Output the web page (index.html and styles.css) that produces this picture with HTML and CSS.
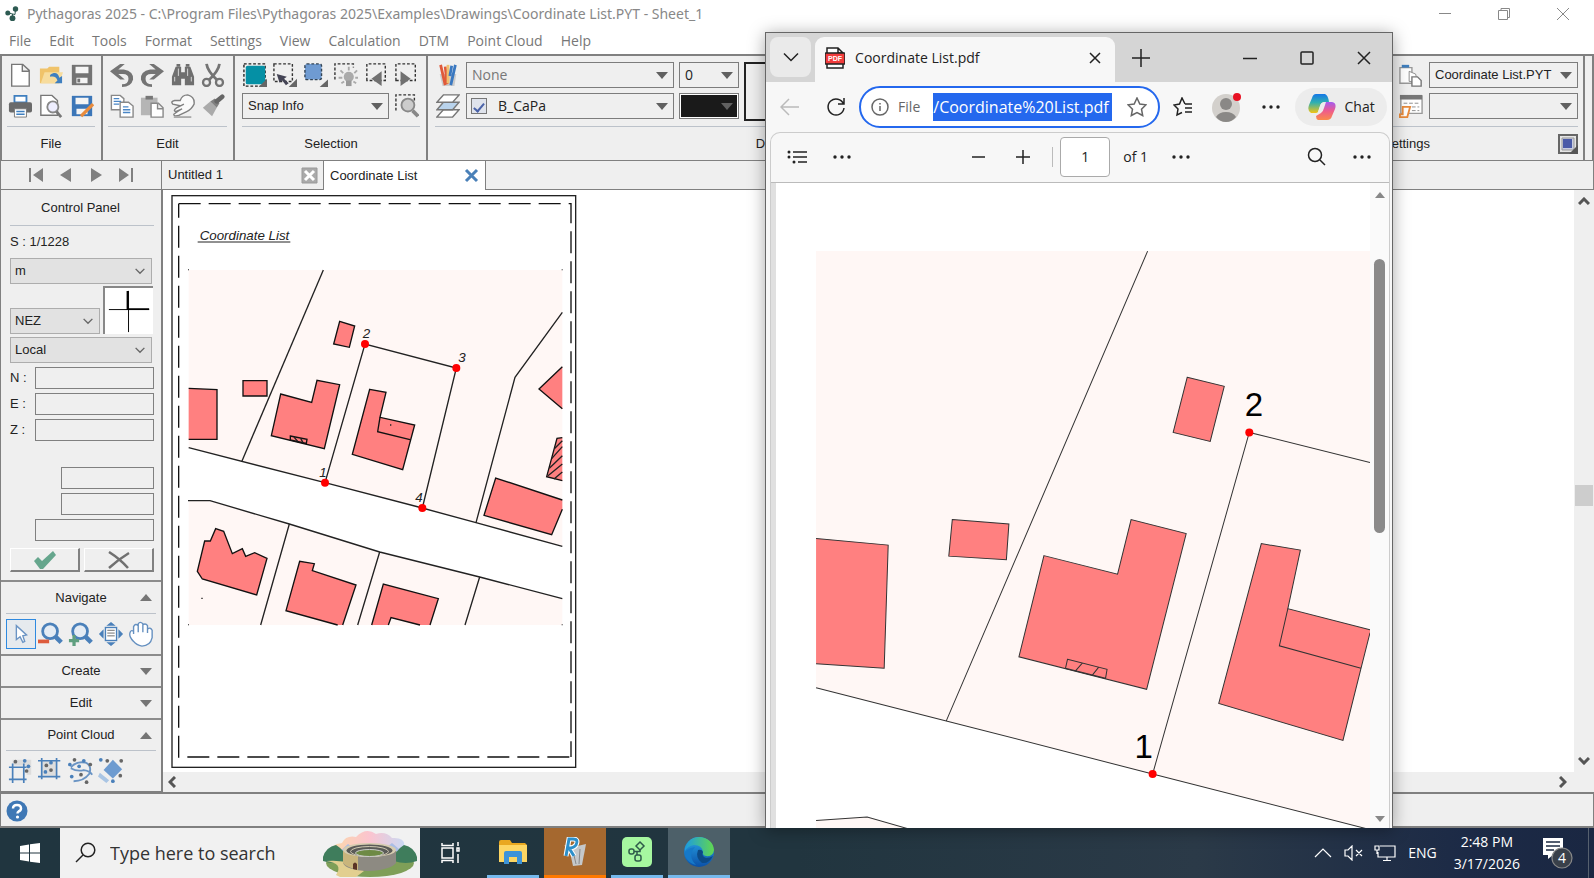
FILE: index.html
```html
<!DOCTYPE html>
<html lang="en">
<head>
<meta charset="utf-8">
<title>Pythagoras 2025</title>
<link rel="stylesheet" href="styles.css">
</head>
<body>
<svg class="defs" aria-hidden="true">
  <defs>
    <linearGradient id="edgeA" x1="0" y1="0" x2="1" y2="0"><stop offset="0" stop-color="#1c9be0"/><stop offset="1" stop-color="#62d84e"/></linearGradient>
    <linearGradient id="edgeB" x1="0" y1="0" x2="0" y2="1"><stop offset="0" stop-color="#2aa6e6"/><stop offset="1" stop-color="#0a50a8"/></linearGradient>
    <linearGradient id="copA" x1="0" y1="0" x2="0" y2="1"><stop offset="0" stop-color="#1477e8"/><stop offset=".45" stop-color="#2fb0b0"/><stop offset="1" stop-color="#f2c414"/></linearGradient>
    <linearGradient id="copB" x1="0" y1="0" x2="0" y2="1"><stop offset="0" stop-color="#a45cf0"/><stop offset=".5" stop-color="#ee5c8c"/><stop offset="1" stop-color="#fb8a4a"/></linearGradient>
    <linearGradient id="sky" x1="0" y1="0" x2="1" y2="0"><stop offset="0" stop-color="#fbd9a8"/><stop offset=".5" stop-color="#fbc4cf"/><stop offset="1" stop-color="#c3dcf8"/></linearGradient>
    <symbol id="tri" viewBox="0 0 12 7"><path d="M0 0H12L6 7Z" fill="#606060"/></symbol>
    <symbol id="chev" viewBox="0 0 12 8"><path d="M1 1L6 6L11 1" fill="none" stroke="#666" stroke-width="1.6"/></symbol>
    <symbol id="dots" viewBox="0 0 18 4"><circle cx="2" cy="2" r="1.7"/><circle cx="9" cy="2" r="1.7"/><circle cx="16" cy="2" r="1.7"/></symbol>
  </defs>
</svg>

<main class="app">
  <header class="titlebar">
    <svg class="logo" viewBox="0 0 14 16"><g fill="#2d5a52"><circle cx="10.500" cy="3" r="2.700"/><circle cx="2.800" cy="7" r="2.500"/><circle cx="7.500" cy="12.200" r="2.900"/></g><path d="M3 7L10 8.500L10.500 3M7.500 12V8" stroke="#2d5a52" fill="none"/></svg>
    <h1>Pythagoras 2025 - C:\Program Files\Pythagoras 2025\Examples\Drawings\Coordinate List.PYT - Sheet_1</h1>
    <div class="wincontrols">
      <button aria-label="Minimize"><svg width="14" height="14" viewBox="0 0 14 14"><path d="M1 6.500H13"/></svg></button>
      <button aria-label="Restore"><svg width="14" height="14" viewBox="0 0 14 14"><path d="M1.500 3.500H10.500V12.500H1.500ZM4 3.500V1.500H12.500V10.500H10.500"/></svg></button>
      <button aria-label="Close"><svg width="14" height="14" viewBox="0 0 14 14"><path d="M1 1L13 13M13 1L1 13"/></svg></button>
    </div>
  </header>
  <nav class="menu">
    <a href="#">File</a><a href="#">Edit</a><a href="#">Tools</a><a href="#">Format</a><a href="#">Settings</a><a href="#">View</a><a href="#">Calculation</a><a href="#">DTM</a><a href="#">Point Cloud</a><a href="#">Help</a>
  </nav>

  <section class="ribbon">
    <div class="group g-file">
      <div class="tools">
        <button aria-label="New"><svg viewBox="0 0 26 26"><path d="M4 1.500H16L23 8V25H4ZM15.500 1.500V9H23" fill="#fff" stroke="#777" stroke-width="1.500"/></svg></button>
        <button aria-label="Open"><svg viewBox="0 0 26 26"><path d="M1 22V6H9L11 4H22V22Z" fill="#f0c36a"/><path d="M2 22L6 10H26L22 22Z" fill="#f7dc9d"/><path d="M12 13C17 9 21 11 22 16L25 14V22H17L20 19C19 15 16 14 12 15Z" fill="#3f7fbf"/></svg></button>
        <button aria-label="Save"><svg viewBox="0 0 26 26"><path d="M2 2H24V24H2Z" fill="#737373"/><path d="M6 4H20V11H6ZM7 16H19V22H7Z" fill="#f4f4f4"/><path d="M8 17H11V21H8Z" fill="#737373"/></svg></button>
        <button aria-label="Print"><svg viewBox="0 0 26 26"><path d="M7 2H20V9H7Z" fill="#fff" stroke="#3f7fbf" stroke-width="2"/><rect x="1" y="9" width="25" height="11" rx="2" fill="#6a6a6a"/><path d="M7 16H20V25H7Z" fill="#fff" stroke="#777"/><path d="M9 19H18M9 22H18" stroke="#3f7fbf" stroke-width="1.500"/></svg></button>
        <button aria-label="Print preview"><svg viewBox="0 0 26 26"><path d="M2 1.500H14L20 7V23H2Z" fill="#fff" stroke="#777" stroke-width="1.500"/><circle cx="15" cy="14" r="6" fill="#eef" stroke="#888" stroke-width="2"/><path d="M19 19L24 25" stroke="#777" stroke-width="3"/></svg></button>
        <button aria-label="Save as"><svg viewBox="0 0 26 26"><path d="M2 2H24V24H2Z" fill="#3b76b8"/><path d="M6 4H20V11H6ZM7 16H19V22H7Z" fill="#f4f4f4"/><path d="M12 24L25 11" stroke="#e98b3c" stroke-width="3.500"/></svg></button>
      </div>
      <h2>File</h2>
    </div>
    <div class="group g-edit">
      <div class="tools">
        <button aria-label="Undo"><svg viewBox="0 0 26 26"><path d="M0 9L11 1H16L9 7H15Q26 9 25 18Q23 26 13 26V23Q20 23 20 17Q20 12 14 12H9L16 18H11Z" fill="#747474"/></svg></button>
        <button aria-label="Redo"><svg viewBox="0 0 26 26"><path d="M26 9L15 1H10L17 7H11Q0 9 1 18Q3 26 13 26V23Q6 23 6 17Q6 12 12 12H17L10 18H15Z" fill="#747474"/></svg></button>
        <button aria-label="Find"><svg viewBox="0 0 26 26"><path d="M5 4H11V10H15V4H21L25 15V24H15V17H11V24H1V15Z" fill="#6f6f6f"/><path d="M6 1V4H10V1ZM16 1V4H20V1Z" fill="#6f6f6f"/><path d="M4 20V15M22 20V15M8 6V14M18 6V14" stroke="#ddd"/></svg></button>
        <button aria-label="Cut"><svg viewBox="0 0 26 26"><path d="M6 1Q7 9 18 19M20 1Q19 9 8 19" fill="none" stroke="#747474" stroke-width="3"/><circle cx="6" cy="21" r="3.800" fill="#eee" stroke="#747474" stroke-width="2.500"/><circle cx="20" cy="21" r="3.800" fill="#eee" stroke="#747474" stroke-width="2.500"/></svg></button>
        <button aria-label="Copy"><svg viewBox="0 0 26 26"><g fill="#fff" stroke="#888" stroke-width="1.500"><path d="M1.500 1.500H11L15 5V17H1.500Z"/><path d="M11 9H20L25 13V25H11Z"/></g><path d="M4 5H10M4 8H12M4 11H10M14 14H20M14 17H22M14 20H22" stroke="#4a86c6" stroke-width="1.500"/></svg></button>
        <button aria-label="Paste"><svg viewBox="0 0 26 26"><path d="M1 4H19V23H1Z" fill="#b5b5b5"/><path d="M6 2H14V6H6Z" fill="#777"/><path d="M12 10H20L25 15V25H12ZM19 10V16H25" fill="#fff" stroke="#888" stroke-width="1.500"/></svg></button>
        <button aria-label="Pick"><svg viewBox="0 0 26 26"><path d="M11 13L2 11Q-1 8 4 7L10 7Q12 1 18 1Q26 3 25 11Q22 17 17 19L9 23Q3 25 3 22Q7 19 12 16L5 19Q2 18 6 15L14 11" fill="#fafafa" stroke="#808080" stroke-width="1.500"/><path d="M3 25H22" stroke="#aaa" stroke-width="2"/></svg></button>
        <button aria-label="Format painter"><svg viewBox="0 0 26 26"><path d="M2 15L10 8L17 15L12 24Z" fill="#aaa"/><path d="M10 8L15 5L20 10L17 15Z" fill="#808080"/><path d="M17 8L23 3" stroke="#666" stroke-width="5" stroke-linecap="round"/></svg></button>
      </div>
      <h2>Edit</h2>
    </div>
    <div class="group g-sel">
      <div class="tools">
        <button aria-label="Fill selection"><svg viewBox="0 0 26 26"><path d="M1 1H24V25H1Z" fill="none" stroke="#222" stroke-width="1.500" stroke-dasharray="3 2"/><rect x="3" y="3" width="21" height="20" rx="2" fill="#0590a5"/><path d="M26 17V26H17Z" fill="#666"/></svg></button>
        <button aria-label="Select arrow"><svg viewBox="0 0 26 26"><path d="M1 1H21V20H1Z" fill="none" stroke="#333" stroke-width="1.500" stroke-dasharray="3 2"/><path d="M4 12L15 15L12 17L17 22L14 24L10 19L7 21Z" fill="#445"/><path d="M26 17V26H17Z" fill="#666"/></svg></button>
        <button aria-label="Select area"><svg viewBox="0 0 26 26"><rect x="1" y="1" width="18" height="17" rx="2" fill="#6f9bd2" stroke="#345" stroke-width="1.500" stroke-dasharray="3 2"/><path d="M26 18V26H17Z" fill="#666"/></svg></button>
        <button aria-label="Highlight"><svg viewBox="0 0 26 26"><path d="M1 18V1H21V5" fill="none" stroke="#333" stroke-width="1.500" stroke-dasharray="3 2"/><path d="M16 4V8M7 8L10 11M25 8L22 11M5 16H9M27 16H23M8 22L11 20M24 22L21 20" stroke="#aaa" stroke-width="2"/><circle cx="16" cy="15" r="5.500" fill="#aaa"/><path d="M13 19H19V25H13Z" fill="#999"/></svg></button>
        <button aria-label="Previous selection"><svg viewBox="0 0 26 26"><path d="M2 19V1H22V19Z" fill="none" stroke="#333" stroke-width="1.500" stroke-dasharray="3 2"/><path d="M7 17L18 9V25Z" fill="#707070"/></svg></button>
        <button aria-label="Next selection"><svg viewBox="0 0 26 26"><path d="M1 19V1H22V19Z" fill="none" stroke="#333" stroke-width="1.500" stroke-dasharray="3 2"/><path d="M17 17L6 9V25Z" fill="#707070"/></svg></button>
      </div>
      <div class="row">
        <label class="combo grow"><select aria-label="Snap"><option>Snap Info</option></select><svg><use href="#tri"/></svg></label>
        <button class="ico" aria-label="Zoom selection"><svg viewBox="0 0 26 26"><path d="M1 18V1H21V8" fill="none" stroke="#333" stroke-width="1.500" stroke-dasharray="3 2"/><circle cx="14" cy="12" r="7" fill="#ccc" stroke="#888" stroke-width="2"/><path d="M19 18L25 24" stroke="#888" stroke-width="4"/></svg></button>
      </div>
      <h2>Selection</h2>
    </div>
    <div class="group g-def">
      <div class="row">
        <button class="ico" aria-label="Pens"><svg viewBox="0 0 26 26"><path d="M4 12H22L20 25H7Z" fill="#ccc"/><path d="M5 2L10 24M10 4L12 23" stroke="#e05a3a" stroke-width="3"/><path d="M13 2V22" stroke="#efc070" stroke-width="3"/><path d="M21 2L16 24M17 3L15 14" stroke="#3a78c0" stroke-width="3"/></svg></button>
        <label class="combo wide dim"><select aria-label="Style"><option>None</option></select><svg><use href="#tri"/></svg></label>
        <label class="combo small"><select aria-label="Line width"><option>0</option></select><svg><use href="#tri"/></svg></label>
        <div class="swatch"></div>
      </div>
      <div class="row">
        <button class="ico" aria-label="Layers"><svg viewBox="0 0 26 26"><g stroke="#777" stroke-width="1.500"><path d="M1 25L8 17H25L18 25Z" fill="#fff"/><path d="M1 17L8 9H25L18 17Z" fill="#b9d3ec"/><path d="M1 9L8 1H25L18 9Z" fill="#fff"/></g></svg></button>
        <label class="combo wide check"><input type="checkbox" checked aria-label="Layer visible"><select aria-label="Layer"><option>B_CaPa</option></select><svg><use href="#tri"/></svg></label>
        <label class="combo small black"><select aria-label="Color"><option></option></select><svg><use href="#tri"/></svg></label>
      </div>
      <h2>Defaults</h2>
    </div>
    <div class="group g-doc">
      <div class="row">
        <button class="ico" aria-label="Documents"><svg viewBox="0 0 26 26"><path d="M1 5H14V22H1Z" fill="#fff" stroke="#999" stroke-width="1.500"/><path d="M3 2H11V5H3Z" fill="#3f7fbf"/><path d="M11 9L18 12L20 20H11Z" fill="#fff" stroke="#888"/><path d="M14 15H20L24 19V25H14Z" fill="#fff" stroke="#777" stroke-width="1.500"/></svg></button>
        <label class="combo doc"><select aria-label="Document"><option>Coordinate List.PYT</option></select><svg><use href="#tri"/></svg></label>
      </div>
      <div class="row">
        <button class="ico" aria-label="Sheet table"><svg viewBox="0 0 26 26"><path d="M2 2H25V21H2Z" fill="#fff" stroke="#999" stroke-width="1.500"/><path d="M1 1H25V6H1Z" fill="#777"/><path d="M5 10H22M14 14H22M14 18H22" stroke="#888" stroke-dasharray="4 2"/><path d="M4 14H12L9 25H1V22H4Z" fill="#fff" stroke="#e98b3c" stroke-width="2"/></svg></button>
        <label class="combo doc"><select aria-label="Sheet"><option></option></select><svg><use href="#tri"/></svg></label>
      </div>
      <div class="foot"><h2>Settings</h2><button class="corner" aria-label="Options"><svg viewBox="0 0 20 20"><path d="M1 1H19V19H1Z" fill="#e4e4e4" stroke="#666" stroke-width="2"/><path d="M4 4H16V16H4Z" fill="#c8cce0" stroke="#999"/><path d="M5 5H14V14H5Z" fill="#4a5aa8"/><path d="M20 11V20H11Z" fill="#555"/></svg></button></div>
    </div>
  </section>

  <div class="tabs">
    <div class="pager">
      <button aria-label="First"><svg width="16" height="16" viewBox="0 0 16 16"><path d="M1 1H3V15H1ZM15 1V15L5 8Z"/></svg></button>
      <button aria-label="Previous"><svg width="16" height="16" viewBox="0 0 16 16"><path d="M13 1V15L2 8Z"/></svg></button>
      <button aria-label="Next"><svg width="16" height="16" viewBox="0 0 16 16"><path d="M3 1V15L14 8Z"/></svg></button>
      <button aria-label="Last"><svg width="16" height="16" viewBox="0 0 16 16"><path d="M13 1H15V15H13ZM1 1V15L11 8Z"/></svg></button>
    </div>
    <div class="tab"><a href="#">Untitled 1</a><button aria-label="Close tab"><svg width="17" height="17" viewBox="0 0 17 17"><path d="M1 1H16V16H1Z" fill="#aaa" stroke="#999"/><path d="M4 4L13 13M13 4L4 13" stroke="#fff" stroke-width="3"/></svg></button></div>
    <div class="tab active"><a href="#">Coordinate List</a><button aria-label="Close tab"><svg width="17" height="17" viewBox="0 0 17 17"><path d="M3 3L14 14M14 3L3 14" stroke="#4a80b8" stroke-width="3"/></svg></button></div>
    <div class="rest"></div>
  </div>

  <div class="work">
    <aside class="panel">
      <section class="control">
        <h2>Control Panel</h2>
        <p>S : 1/1228</p>
        <label class="flat"><select aria-label="Unit"><option>m</option></select><svg><use href="#chev"/></svg></label>
        <div class="axisrow">
          <label class="flat"><select aria-label="Axis order"><option>NEZ</option></select><svg><use href="#chev"/></svg></label>
          <svg class="axis" viewBox="0 0 50 48"><path d="M4 22.500H46M24.500 3V46" stroke="#000"/><path d="M23.500 3V22H46" stroke="#000" stroke-width="2" fill="none"/></svg>
        </div>
        <label class="flat"><select aria-label="Coordinate system"><option>Local</option></select><svg><use href="#chev"/></svg></label>
        <div class="fields">
          <label for="fn">N :</label><input id="fn">
          <label for="fe">E :</label><input id="fe">
          <label for="fz">Z :</label><input id="fz">
        </div>
        <div class="extra"><input aria-label="Value 1"><input aria-label="Value 2"><input class="long" aria-label="Value 3"></div>
        <div class="confirm">
          <button aria-label="Accept"><svg width="24" height="20" viewBox="0 0 24 20"><path d="M1 11L5 7L9 11L20 1L23 5L10 19H7Z" fill="#66a68d"/></svg></button>
          <button aria-label="Cancel"><svg width="22" height="18" viewBox="0 0 22 18"><path d="M1 1Q12 8 20 17M21 2Q11 8 1 17" fill="none" stroke="#707070" stroke-width="2.500"/></svg></button>
        </div>
      </section>
      <section>
        <h3>Navigate<svg class="up"><use href="#tri"/></svg></h3>
        <div class="icons">
          <button class="on" aria-label="Pointer"><svg viewBox="0 0 28 28"><path d="M9 5V20L13 17L16 23L18 22L16 16L20 15Z" fill="#fff" stroke="#6b94c4" stroke-width="1.500"/></svg></button>
          <button aria-label="Zoom out"><svg viewBox="0 0 28 28"><circle cx="13" cy="11" r="8" fill="#e5ecf4" stroke="#4a80ba" stroke-width="3"/><path d="M19 17L25 23" stroke="#4a80ba" stroke-width="5"/><path d="M0 22H12" stroke="#dd5b3c" stroke-width="4"/></svg></button>
          <button aria-label="Zoom in"><svg viewBox="0 0 28 28"><circle cx="13" cy="11" r="8" fill="#e5ecf4" stroke="#4a80ba" stroke-width="3"/><path d="M19 17L25 23" stroke="#4a80ba" stroke-width="5"/><path d="M1 21H12M6.500 15V27" stroke="#5f9f7f" stroke-width="3.500"/></svg></button>
          <button aria-label="Fit"><svg viewBox="0 0 28 28"><rect x="8" y="7" width="12" height="14" fill="#fff" stroke="#4a80ba" stroke-width="1.500"/><path d="M10 10H18M10 13H18M10 16H18" stroke="#666"/><path d="M9 5L14 1L19 5ZM9 23L14 27L19 23ZM6 9L1 14L6 19ZM22 9L27 14L22 19Z" fill="#4a80ba"/></svg></button>
          <button aria-label="Pan"><svg viewBox="0 0 28 28"><path d="M6 22Q1 17 2 13Q3 9 6 11V14V6Q8 2 11 5V12V3Q13 0 16 3V12V4Q19 2 21 5V13V9Q24 6 26 10V18Q24 27 15 27Q9 26 6 22Z" fill="#fff" stroke="#6590c0" stroke-width="1.500"/></svg></button>
        </div>
      </section>
      <section><h3>Create<svg><use href="#tri"/></svg></h3></section>
      <section><h3>Edit<svg><use href="#tri"/></svg></h3></section>
      <section class="last">
        <h3>Point Cloud<svg class="up"><use href="#tri"/></svg></h3>
        <div class="icons">
          <button aria-label="Clip outside"><svg viewBox="0 0 28 28"><path d="M5 2H25V18H20V8H5Z" fill="#ddd"/><path d="M1 10H20M1 23H20M5 6V27M17 6V27" stroke="#4a80ba" stroke-width="1.800"/><g fill="#666"><circle cx="8" cy="4" r="2"/><circle cx="20" cy="14" r="2"/></g><g fill="#4a80ba"><circle cx="18" cy="3" r="2"/><circle cx="22" cy="9" r="2"/></g></svg></button>
          <button aria-label="Clip inside"><svg viewBox="0 0 28 28"><path d="M4 3H20V19H4Z" fill="#ddd"/><path d="M0 3H24M0 20H24M4 0V23M20 0V23" stroke="#4a80ba" stroke-width="1.800"/><g fill="#666"><circle cx="9" cy="8" r="2"/><circle cx="14" cy="13" r="2"/></g><g fill="#4a80ba"><circle cx="14" cy="5" r="2"/><circle cx="8" cy="15" r="2"/></g></svg></button>
          <button aria-label="Lasso"><svg viewBox="0 0 28 28"><path d="M3 10Q9 3 19 5Q26 8 23 17Q17 25 6 25M3 11Q10 15 17 13Q24 14 26 18" fill="none" stroke="#6a94c4" stroke-width="2"/><g fill="#4a80ba"><circle cx="2" cy="7" r="2"/><circle cx="17" cy="3" r="2"/><circle cx="4" cy="20" r="2"/><circle cx="12" cy="9" r="2"/></g><g fill="#666"><circle cx="7" cy="2" r="2"/><circle cx="24" cy="7" r="2"/><circle cx="14" cy="18" r="2"/><circle cx="20" cy="26" r="2"/></g></svg></button>
          <button aria-label="Erase points"><svg viewBox="0 0 28 28"><path d="M6 13L16 2L26 12L16 22Z" fill="#6d9bd0"/><path d="M2 16L12 24L9 27L0 20Z" fill="#a9c5e4"/><g fill="#4a80ba"><circle cx="3" cy="2" r="2"/><circle cx="16" cy="25" r="2"/></g><g fill="#666"><circle cx="10" cy="3" r="2"/><circle cx="25" cy="3" r="2"/><circle cx="24" cy="19" r="2"/></g></svg></button>
        </div>
      </section>
    </aside>
    <div class="canvas">
      <div class="sheetarea">
        <svg class="sheet" viewBox="0 0 1260 1740" role="img" aria-label="Coordinate list drawing">
          <rect x="21" y="17" width="1211" height="1715" fill="#fff" stroke="#222" stroke-width="4"/>
          <g fill="none" stroke="#111" stroke-width="4" stroke-dasharray="66 24"><path d="M41 41H1218V1701"/><path d="M41 41V1701H1218" stroke-dashoffset="24"/></g>
          <text class="cad title" x="104" y="149">Coordinate List</text>
          <path d="M98 156H376" stroke="#222" stroke-width="3"/>
          <path d="M71 240H1192V1069L933 998L480 878L71 773ZM71 932H135L373 1002L644 1086L944 1161L1192 1226V1305H71Z" fill="#fff7f5"/>
          <g fill="#ff8080" stroke="#111" stroke-width="4">
            <path d="M71 595L156 599V748H71"/><path d="M234 572H306V618H234Z"/><path d="M524 394L569 408L553 472L506 462Z"/>
            <path d="M347 612L440 637L456 571L524 584L478 776L319 737Z"/><path d="M376 738L426 748L424 760L376 750Z"/>
            <path d="M614 598L663 607L645 682L749 705L713 839L562 793Z"/><path d="M645 682L638 725L735 749" fill="none"/>
            <path d="M1192 530L1122 597L1192 656"/><path d="M1192 743L1176 745L1145 860L1192 872"/>
            <path d="M1192 930L992 864L957 976L1160 1034L1192 958"/>
            <path d="M119 1053H136L152 1016L176 1024L202 1091L232 1076L242 1099L269 1088L306 1105L275 1215L112 1167L97 1144Z"/>
            <path d="M533 1305L573 1185L442 1142L448 1121L404 1114L363 1262L518 1305"/>
            <path d="M620 1305L655 1182L820 1226L795 1305" stroke-linejoin="miter"/>
          </g>
          <path d="M670 1306L678 1283L765 1306Z" fill="#fff7f5"/><path d="M670 1305L678 1283L765 1305" fill="none" stroke="#111" stroke-width="4"/>
          <g fill="none" stroke="#222" stroke-width="4"><path d="M475 240L230 815"/><path d="M71 773L480 878L772 954L933 998L1192 1069"/><path d="M480 878L600 462L874 534L772 954"/><path d="M1192 367L1050 562L933 998"/><path d="M69 932H135L373 1002L644 1086L944 1161L1192 1226"/><path d="M373 1002L287 1305M644 1086L578 1305M944 1161L900 1305"/><path d="M1153 835L1192 797M1160 806L1192 770M1149 857L1192 822M1167 867L1192 846M1168 776L1192 752M387 741L398 754M407 745L414 758"/></g>
          <path d="M69 238H72V241H69ZM1190 238H1193V241H1190ZM69 1303H72V1306H69ZM1190 1303H1193V1306H1190ZM109 1223H113V1227H109ZM675 703H679V707H675Z" fill="#222"/>
          <g fill="#f00"><circle cx="600" cy="462" r="12"/><circle cx="874" cy="534" r="12"/><circle cx="480" cy="878" r="12"/><circle cx="772" cy="954" r="12"/></g>
          <g class="cad num"><text x="593" y="444">2</text><text x="880" y="515">3</text><text x="463" y="860">1</text><text x="751" y="935">4</text></g>
        </svg>
      </div>
      <div class="vscroll"><svg width="12" height="8" viewBox="0 0 12 8"><path d="M1 7L6 2L11 7"/></svg><div class="thumb"></div><svg width="12" height="8" viewBox="0 0 12 8"><path d="M1 1L6 6L11 1"/></svg></div>
      <div class="hscroll"><svg width="8" height="12" viewBox="0 0 8 12"><path d="M7 1L2 6L7 11"/></svg><svg width="8" height="12" viewBox="0 0 8 12"><path d="M1 1L6 6L1 11"/></svg></div>
    </div>
  </div>
  <footer class="status"><button aria-label="Help"><svg width="22" height="22" viewBox="0 0 22 22"><circle cx="11" cy="11" r="10.500" fill="#3f78b5"/><path d="M7 8.500Q7 5 11 5Q15 5 15 8.500Q15 10.500 12.500 11.500Q11.500 12 11.500 13.500" fill="none" stroke="#fff" stroke-width="2.500"/><circle cx="11.500" cy="17" r="1.600" fill="#fff"/></svg></button></footer>
</main>

<section class="browser">
  <header class="btabs">
    <button class="tabmenu" aria-label="Tab actions"><svg width="16" height="10" viewBox="0 0 16 10"><path d="M1 1.500L8 8.500L15 1.500"/></svg></button>
    <div class="btab">
      <svg width="20" height="22" viewBox="0 0 20 22"><path d="M2 1H13L18 6V21H2ZM13 1V6H18" fill="#fff" stroke="#222" stroke-width="1.500"/><rect x="0" y="6" width="20" height="11" rx="1" fill="#f23c3c"/><text x="3" y="14" class="pdf">PDF</text></svg>
      <span>Coordinate List.pdf</span>
      <button aria-label="Close tab"><svg width="12" height="12" viewBox="0 0 12 12"><path d="M1 1L11 11M11 1L1 11"/></svg></button>
    </div>
    <button class="newtab" aria-label="New tab"><svg width="20" height="20" viewBox="0 0 20 20"><path d="M10 1V19M1 10H19"/></svg></button>
    <div class="bctl">
      <button aria-label="Minimize"><svg width="14" height="14" viewBox="0 0 14 14"><path d="M0 7.500H14"/></svg></button>
      <button aria-label="Maximize"><svg width="14" height="14" viewBox="0 0 14 14"><rect x="1" y="1" width="12" height="12" rx="1"/></svg></button>
      <button aria-label="Close"><svg width="14" height="14" viewBox="0 0 14 14"><path d="M1 1L13 13M13 1L1 13"/></svg></button>
    </div>
  </header>
  <div class="bbar">
    <button class="off" aria-label="Back"><svg width="20" height="18" viewBox="0 0 20 18"><path d="M19 9H1M9 1L1 9L9 17"/></svg></button>
    <button aria-label="Refresh"><svg width="20" height="20" viewBox="0 0 20 20"><path d="M17.500 7A8 8 0 1 0 18 11M18 1V7H12"/></svg></button>
    <div class="url">
      <svg width="18" height="18" viewBox="0 0 18 18"><circle cx="9" cy="9" r="8"/><path d="M9 8V13M9 5V6.500"/></svg>
      <label for="addr">File</label>
      <input id="addr" value="/Coordinate%20List.pdf">
      <button aria-label="Favorite"><svg width="20" height="20" viewBox="0 0 20 20"><path d="M10 1L12.800 7L19 7.800L14.500 12.200L15.700 18.500L10 15.500L4.300 18.500L5.500 12.200L1 7.800L7.200 7Z"/></svg></button>
    </div>
    <button aria-label="Favorites"><svg width="20" height="20" viewBox="0 0 20 20"><path d="M12 7L9 1L6.500 7L1 8L5 12L4 18L9 15.500M12 7H19M12 11H19M12 15H19"/></svg></button>
    <button class="profile" aria-label="Profile"><svg width="30" height="30" viewBox="0 0 30 30"><circle cx="14" cy="16" r="14" fill="#d3d0cc" stroke="none"/><circle cx="14" cy="12" r="6" fill="#8a8886" stroke="none"/><path d="M4 25Q7 20 14 20Q21 20 24 25Q20 30 14 30Q8 30 4 25Z" fill="#8a8886" stroke="none"/><circle cx="25" cy="5" r="4" fill="#e81123" stroke="none"/></svg></button>
    <button class="fill" aria-label="More"><svg width="18" height="4"><use href="#dots"/></svg></button>
    <button class="chat"><svg width="28" height="26" viewBox="0 0 28 26"><path d="M18 8H24Q29 9 27 15L24 22Q23 26 19 26H10Q8 25 8 22L13 19Q15 18 16 14Z" fill="url(#copB)" stroke="none"/><path d="M8 0H17Q20 1 21 8H17Q13 8 12 12L10 18Q9 19 8 19H3Q-1 17 1 11L4 4Q5 0 8 0Z" fill="url(#copA)" stroke="none"/><path d="M17 8Q13 8 12 12L10 18H12Q14 18 15 14Z" fill="#ececec" stroke="none"/></svg>Chat</button>
  </div>
  <div class="viewer">
    <div class="pbar">
      <button aria-label="Contents"><svg width="20" height="14" viewBox="0 0 20 14"><path d="M6 2H20M6 7H20M11 12H20"/><g stroke="none" fill="#222"><circle cx="2" cy="2" r="1.500"/><circle cx="2" cy="7" r="1.500"/><circle cx="7" cy="12" r="1.500"/></g></svg></button>
      <button class="fill" aria-label="More tools"><svg width="18" height="4"><use href="#dots"/></svg></button>
      <div class="pages">
        <button aria-label="Zoom out"><svg width="14" height="14" viewBox="0 0 14 14"><path d="M1 7H14"/></svg></button>
        <button aria-label="Zoom in"><svg width="14" height="14" viewBox="0 0 14 14"><path d="M0 7H14M7 0V14"/></svg></button>
        <i></i>
        <input id="page" value="1"><label for="page">of 1</label>
        <button class="fill" aria-label="Page options"><svg width="18" height="4"><use href="#dots"/></svg></button>
      </div>
      <button aria-label="Search"><svg width="20" height="20" viewBox="0 0 20 20"><circle cx="8" cy="8" r="6.500"/><path d="M13 13L18 18"/></svg></button>
      <button class="fill" aria-label="Settings"><svg width="18" height="4"><use href="#dots"/></svg></button>
    </div>
    <div class="page">
      <svg class="plan" viewBox="16 3 593 645" preserveAspectRatio="xMinYMin slice" role="img" aria-label="Plan detail">
        <path d="M56 71H609V648H607L392 593L186 540L56 507ZM56 639L107 636L149 648H56Z" fill="#fff7f5"/>
        <g class="b" fill="#ff8080" stroke="#333"><path d="M426.500 197L463.500 206L449.500 261L412.500 252Z"/><path d="M56 358L128 364.500L124 487.500L56 483"/><path d="M192 339L248.500 343.500L246 379L188.500 375.500Z"/><path d="M283.500 375L357 393.500L370.500 339L425.500 353L386 508.500L258.500 476Z"/><path d="M307 478.500L346.500 488.500L345 497.500L305 487.500ZM322 482L315 490M338 486.500L332 494"/><path d="M609 449L527 428L539.500 369.500L500.500 363L458 522.500L582 559.500L600 487.500L609 452"/><path d="M527 428L518.500 465L600 487.500" fill="none"/></g>
        <path d="M387 71L186 540M609 282L488.500 252L392 593M56 507L186 540L392 593L607 648M56 639.500L107 636L149 648" fill="none" stroke="#333"/>
        <g fill="#f00"><circle cx="488.500" cy="252" r="4"/><circle cx="392" cy="593" r="4"/></g>
        <text class="bignum" x="484" y="236">2</text><text class="bignum" x="374" y="577">1</text>
      </svg>
      <div class="pscroll"><svg width="10" height="6" viewBox="0 0 10 6"><path d="M0 6L5 0L10 6Z"/></svg><div class="pthumb"></div><svg width="10" height="6" viewBox="0 0 10 6"><path d="M0 0H10L5 6Z"/></svg></div>
    </div>
  </div>
</section>

<footer class="taskbar">
  <button class="start" aria-label="Start"><svg width="20" height="20" viewBox="0 0 20 20"><path d="M0 3L9 1.500V9.500H0ZM10 1.300L20 0V9.500H10ZM0 10.500H9V18.500L0 17ZM10 10.500H20V20L10 18.700Z" fill="#fff"/></svg></button>
  <label class="search">
    <svg width="22" height="22" viewBox="0 0 22 22"><circle cx="13" cy="8" r="6.800" fill="none" stroke="#222" stroke-width="1.500"/><path d="M8 13L1 20" stroke="#222" stroke-width="1.500"/></svg>
    <input placeholder="Type here to search" aria-label="Search">
    <svg class="art" viewBox="0 0 96 48"><path d="M10 30Q4 16 20 14Q24 6 34 8Q44 -2 54 5Q64 2 70 9Q84 8 82 18Q90 22 86 30Z" fill="url(#sky)"/><path d="M14 26L26 15L36 22L48 14L60 22L70 14L84 26Z" fill="#a9bde6"/><ellipse cx="48" cy="34" rx="44" ry="14" fill="#7f9f58"/><path d="M1 28Q4 18 14 16Q24 22 26 32Q12 36 1 32ZM95 28Q92 18 82 16Q72 22 72 32Q84 36 95 32Z" fill="#3f7d5c"/><path d="M14 46Q22 34 4 32Q30 30 42 42L34 48H18Z" fill="#e2cf90"/><path d="M21 22V34Q24 41 46 42Q68 41 74 34V22Z" fill="#8d8a82"/><path d="M21 22V34Q24 38 36 41V22Z" fill="#c9b57c"/><ellipse cx="47.500" cy="21" rx="26.500" ry="7" fill="#d6ccb0"/><ellipse cx="47.500" cy="21.500" rx="23" ry="6" fill="#5b5b58"/><ellipse cx="47.500" cy="22.500" rx="19" ry="5" fill="#5b5b58" stroke="#d0c8b0"/><ellipse cx="47.500" cy="24" rx="14" ry="3.500" fill="#6e8a45" stroke="#ccc"/><path d="M31 40V35Q33 32 35 35V41Z" fill="#5a3325"/></svg>
  </label>
  <button aria-label="Task view"><svg width="22" height="22" viewBox="0 0 22 22" fill="none" stroke="#fff" stroke-width="1.500"><path d="M2 6H13V16H2ZM2 1V3.500H13V1M2 21V18.500H13V21M18 0V4M18 12V21"/><rect x="17" y="6" width="2" height="3"/></svg></button>
  <button class="line" aria-label="File Explorer"><svg width="28" height="26" viewBox="0 0 28 26"><path d="M0 3Q0 1 2 1H11L13 4H26L28 6V22H0Z" fill="#e9a820"/><path d="M0 6H28V23H0Z" fill="#fdd663"/><path d="M5 25V14Q5 12 7 12H21Q23 12 23 14V25H18V18H10V25Z" fill="#3d93d8"/></svg></button>
  <button class="orange" aria-label="Registry tool"><svg width="26" height="30" viewBox="0 0 26 30"><path d="M7 11L24 7L20 28L11 29Z" fill="#c5c8ca"/><path d="M11 14L14 27M18 12L17 27" stroke="#888"/><path d="M4 19L7 2H11Q17 2 14 8Q12 11 7 11L12 19" fill="none" stroke="#fff" stroke-width="5"/><path d="M4 19L7 2H11Q17 2 14 8Q12 11 7 11L12 19" fill="none" stroke="#2d8fc9" stroke-width="3"/></svg></button>
  <button class="line" aria-label="Pythagoras"><svg width="30" height="30" viewBox="0 0 30 30"><rect width="30" height="30" rx="5" fill="#a6f7a0"/><g fill="none" stroke="#2e5a4a" stroke-width="1.500"><path d="M18 5L22 9L18 13L14 9Z"/><rect x="7" y="12" width="5" height="5" rx="2"/><rect x="13" y="18" width="6" height="6" rx="2"/><path d="M12 14.500H18V12M15 18V14"/></g></svg></button>
  <button class="line cur" aria-label="Microsoft Edge"><svg width="32" height="32" viewBox="0 0 32 32"><circle cx="16" cy="16" r="15" fill="url(#edgeB)"/><path d="M2 12Q6 1 17 1Q30 3 31 14Q30 21 23 20Q19 19 20 16Q19 9 11 9Q5 10 2 15Z" fill="url(#edgeA)"/><path d="M12 11Q4 20 13 29Q5 27 2 20Q1 13 12 11Z" fill="#1679c9"/><path d="M20 16Q18 20 23 22Q27 22 30 20Q26 28 19 27Q12 22 15 14Q19 13 20 16Z" fill="#0c4a86"/></svg></button>
  <div class="tray">
    <button aria-label="Hidden icons"><svg width="18" height="10" viewBox="0 0 18 10"><path d="M1 9L9 1L17 9"/></svg></button>
    <button aria-label="Volume muted"><svg width="20" height="16" viewBox="0 0 20 16"><path d="M1 5H4L8 1V15L4 11H1ZM12 5L18 11M18 5L12 11"/></svg></button>
    <button aria-label="Network"><svg width="22" height="18" viewBox="0 0 22 18"><path d="M6 2H21V13H4V8M9 16.500H17M13 13V16M1 2H5V6H1ZM3 6V10"/></svg></button>
    <span>ENG</span>
    <time>2:48 PM<br>3/17/2026</time>
    <button class="notif" aria-label="4 notifications"><svg width="32" height="32" viewBox="0 0 32 32"><path d="M1 1H21V18H11L6 22V18H1Z" fill="#fff" stroke="none"/><path d="M4 5H18M4 9H18M4 13H12" stroke="#1c2a42" stroke-width="1.500"/><circle cx="20" cy="21" r="10" fill="#39404a" stroke="#888"/></svg><b>4</b></button>
    <i></i>
  </div>
</footer>
</body>
</html>
```
FILE: styles.css
```css
* { box-sizing: border-box; }
body { margin: 0; height: 100vh; display: flex; flex-direction: column; overflow: hidden; position: relative; font: 13px/16px "Liberation Sans", Arial, sans-serif; color: #222; background: #fff; }
button, input, select { font: inherit; color: inherit; margin: 0; padding: 0; border: 0; background: none; border-radius: 0; min-width: 0; }
button { display: flex; align-items: center; justify-content: center; }
select { appearance: none; }
h1, h2, h3, p { margin: 0; font-weight: normal; font-size: inherit; }
a { color: inherit; text-decoration: none; }
svg { display: block; flex: none; }
.defs { position: absolute; width: 0; height: 0; }

.app { flex: 1; min-height: 0; display: flex; flex-direction: column; }
.titlebar { display: flex; align-items: center; height: 28px; padding-left: 5px; color: #888; }
.titlebar h1 { flex: 1; padding-left: 8px; font: 14px/20px "Noto Sans", "Open Sans", sans-serif; white-space: nowrap; }
.logo { width: 14px; height: 16px; }
.wincontrols { display: flex; padding-right: 2px; }
.wincontrols button { width: 59px; height: 28px; }
.wincontrols svg { stroke: #888; fill: none; }
.menu { display: flex; gap: 18px; height: 26px; padding: 0 9px; align-items: center; font: 14px/20px "Open Sans", "Noto Sans", sans-serif; color: #777; white-space: nowrap; }

.ribbon { display: flex; height: 107px; background: #efefef; border: 1px solid #808080; border-width: 2px 2px 1px; padding-right: 7px; }
.group { display: flex; flex-direction: column; padding: 6px 6px 0 5px; border-right: 2px solid #808080; }
.group h2 { flex: 1; display: flex; align-items: center; justify-content: center; border-top: 1px solid #bcc2ca; margin-top: 7px; }
.g-file { width: 101px; }
.g-edit { width: 132px; }
.g-sel { width: 193px; }
.g-def { width: 704px; gap: 5px; }
.g-doc { flex: 1; }
.g-doc, .g-sel { gap: 5px; }
.g-def h2, .g-sel h2 { margin-top: 2px; }
.group.g-sel, .group.g-def { padding-left: 7px; }
.tools { display: grid; grid-template-columns: repeat(auto-fill, 26px); justify-content: space-between; gap: 5px 0; height: 57px; }
.g-sel .tools { height: 26px; }
.g-edit .tools { padding: 0 1px; }
.tools svg, .ico svg { width: 24px; height: 24px; }
.tools button, .ico { width: 26px; height: 26px; flex: none; }
.row { display: flex; gap: 5px; height: 26px; }
.combo { display: grid; height: 26px; align-items: center; border: 1px solid #7c7c7c; grid-template-columns: 1fr; }
.combo > * { grid-area: 1 / 1; }
.combo select { width: 100%; height: 22px; padding-left: 5px; }
.combo svg, .flat svg { justify-self: end; width: 12px; height: 7px; margin-right: 5px; pointer-events: none; }
.grow { flex: 1; }
.wide { width: 208px; }
.g-def .combo select { font-size: 14px; font-family: "Open Sans", sans-serif; line-height: 20px; }
.dim { color: #777; }
.small { width: 60px; }
.check { grid-template-columns: 26px 1fr; }
.check > * { grid-row: 1; grid-column: 2; }
.check input { grid-column: 1; appearance: none; width: 16px; height: 16px; margin-left: 4px; border: 1px solid #777; background: #dfe3ec; display: grid; place-items: center; }
.check input::after { content: ""; width: 4px; height: 9px; border: solid #4a62a8; border-width: 0 2px 2px 0; transform: rotate(40deg); }
.black { background: #1a1a1a; box-shadow: inset 0 0 0 1px #fff; }
.swatch { width: 60px; height: 59px; border: 2px solid #222; }
.g-doc { padding-right: 5px; }
.g-doc .row { justify-content: flex-end; }
.doc { width: 149px; }
.foot { flex: 1; display: flex; align-items: center; border-top: 1px solid #bcc2ca; margin-top: 2px; }
.foot h2 { border: 0; margin: 0; padding-left: 118px; }
.corner { width: 20px; height: 20px; }
.corner svg { width: 20px; height: 20px; }

.tabs { display: flex; height: 29px; background: #efefef; border-left: 1px solid #808080; }
.pager { width: 161px; display: flex; align-items: center; justify-content: center; gap: 14px; border: solid #808080; border-width: 0 1px 1px 0; fill: #808080; }
.tab { width: 162px; display: flex; align-items: center; justify-content: space-between; padding: 0 5px 0 6px; border: solid #808080; border-width: 0 1px 1px 0; }
.tab.active { background: #fff; border-bottom: 0; }
.rest { flex: 1; border: solid #808080; border-width: 0 1px 1px 0; }

.work { flex: 1; min-height: 0; display: flex; }
.panel { width: 163px; background: #efefef; border: solid #808080; border-width: 0 2px 1px 1px; display: flex; flex-direction: column; }
.panel section { border-bottom: 2px solid #8c8c8c; padding: 0 5px; }
.panel section.last { border: 0; flex: 1; }
.control { display: flex; flex-direction: column; }
.panel .control { padding: 0 7px 8px 9px; }
.control h2 { line-height: 35px; padding-right: 3px; text-align: center; border-bottom: 1px solid #bcc2ca; }
.control p { line-height: 32px; }
.flat { display: grid; align-items: center; width: 142px; height: 26px; background: #e2e2e2; border: 1px solid #adadad; }
.flat > * { grid-area: 1 / 1; }
.flat select { width: 100%; height: 24px; padding-left: 4px; }
.axisrow { display: flex; align-items: flex-end; gap: 3px; padding: 2px 0 3px; }
.axisrow .flat { width: 90px; }
.axis { width: 50px; height: 48px; background: #fff; border: solid #888; border-width: 2px 0 0 2px; }
.fields { display: grid; grid-template-columns: 25px 1fr; gap: 4px 0; padding-top: 4px; align-items: center; }
.control input { height: 22px; border: 1px solid #808080; width: 100%; }
.extra { display: flex; flex-direction: column; align-items: flex-end; gap: 4px; padding-top: 26px; }
.control .extra input { width: 93px; }
.control .extra .long { width: 119px; }
.confirm { display: grid; grid-template-columns: 1fr 1fr; gap: 4px; padding-top: 7px; }
.confirm button { height: 24px; border: solid; border-color: #fff #808080 #808080 #fff; border-width: 1px 2px 2px 1px; }
.panel h3 { height: 31px; display: grid; grid-template-columns: 1fr 12px; align-items: center; text-align: center; padding: 0 4px 0 16px; }
.panel section + section + section h3 { height: 30px; }
.panel h3 svg { width: 12px; height: 7px; opacity: .85; }
.panel h3 .up { transform: rotate(180deg); }
.icons { display: flex; border-top: 1px solid #bcc2ca; padding: 5px 0; }
.icons button { width: 30px; height: 30px; border: 1px solid transparent; }
.icons svg { width: 26px; height: 26px; }
.icons .on { border: 1px solid #2f8ae0; background: #e6eaee; }

.canvas { flex: 1; display: grid; grid-template: 1fr 20px / 1fr 20px; min-width: 0; background: #fff; }
.sheetarea { padding: 0 2px; overflow: hidden; min-height: 0; }
.sheet { width: 420px; height: 580px; }
.cad { font-family: "Liberation Sans", Arial, sans-serif; font-style: italic; fill: #222; }
.title { font-size: 40px; }
.num { font-size: 40px; }
.vscroll { background: #efefef; display: flex; flex-direction: column; align-items: center; justify-content: space-between; padding: 7px 0; }
.vscroll svg, .hscroll svg { fill: none; stroke: #555; stroke-width: 3; }
.thumb { width: 18px; height: 21px; background: #cdcdcd; margin-top: 29px; }
.hscroll { grid-column: 1 / 3; background: #efefef; display: flex; align-items: center; justify-content: space-between; padding: 0 27px 0 5px; }
.status { height: 36px; background: #efefef; border: solid #808080; border-width: 2px 1px; padding: 6px 5px; }

.browser { position: absolute; left: 48%; top: 32px; width: 628px; bottom: 50px; display: flex; flex-direction: column; background: #f7f7f7; border: 1px solid #666; border-bottom: 0; box-shadow: 0 2px 16px rgba(0, 0, 0, .35); font: 14px/20px "Open Sans", "Noto Sans", sans-serif; color: #222; }
.browser svg { fill: none; stroke: #222; stroke-width: 1.5; }
.browser .fill svg { fill: #222; stroke: none; }
.btabs { display: flex; align-items: flex-end; height: 49px; background: #d5d5d5; padding-left: 4px; }
.tabmenu { width: 41px; height: 40px; border-radius: 8px; background: #eaeaea; margin: 0 4px 5px 0; }
.btab { width: 300px; height: 45px; background: #f7f7f7; border-radius: 9px 9px 0 0; display: flex; align-items: center; gap: 10px; padding: 0 14px 4px 10px; }
.btab span { flex: 1; }
.browser .pdf { font: bold 7px "Liberation Sans", sans-serif; fill: #fff; stroke: none; }
.newtab { width: 52px; height: 49px; }
.bctl { flex: 1; display: flex; justify-content: flex-end; }
.bctl button { width: 57px; height: 49px; }
.bbar { display: flex; align-items: center; height: 50px; padding: 0 5px 0 14px; }
.bbar > button { width: 45px; height: 38px; }
.bbar > .off { width: 20px; margin-right: 13px; }
.bbar .off svg { stroke: #bbb; }
.url { display: flex; align-items: center; width: 301px; height: 42px; border: 2px solid #2468ee; border-radius: 21px; background: #fff; padding: 0 9px 0 10px; margin-left: 1px; }
.url svg { stroke: #666; }
.url label { color: #666; margin: 0 13px 0 9px; }
.url input { width: 179px; height: 28px; font-size: 16px; color: #fff; background: #2468ee; margin-right: 15px; }
.bbar > .profile { width: 43px; }
.bbar > .chat { flex: 1; border-radius: 19px; background: #ececec; gap: 9px; margin-left: 2px; }
.viewer { flex: 1; min-height: 0; margin: 0 2px 0 4px; border: 1px solid #ccc; border-width: 1px 1px 0; border-radius: 10px 10px 0 0; display: flex; flex-direction: column; }
.pbar { display: flex; align-items: center; height: 50px; border-bottom: 1px solid #bbb; padding: 0 5px 2px 3px; }
.pbar button { width: 45px; height: 40px; }
.pages { flex: 1; display: flex; align-items: center; justify-content: center; }
.pages i { width: 1px; height: 20px; background: #bbb; margin: 0 7px; }
.pages input { width: 50px; height: 40px; border: 1px solid #aaa; border-radius: 4px; background: #fff; text-align: center; }
.pages label { margin: 0 10px 0 13px; }
.page { flex: 1; min-height: 0; display: flex; border-left: 5px solid #e0e0e0; background: #fff; }
.browser .plan { flex: 1; min-width: 0; height: 645px; stroke: none; stroke-width: 1; }
.browser .bignum { font: 33px "Liberation Sans", Arial, sans-serif; fill: #000; stroke: none; }
.pscroll { width: 19px; background: #fafafa; display: flex; flex-direction: column; align-items: center; padding: 9px 0 6px; }
.browser .pscroll svg { fill: #888; stroke: none; }
.pthumb { width: 11px; height: 274px; border-radius: 6px; background: #8a8a8a; margin: 61px 0 auto; }

.taskbar { display: flex; height: 50px; background: linear-gradient(90deg, #20353f 0%, #21353f 50%, #2b3a48 75%, #1c2a46 92%, #1a2742 100%); color: #fff; font: 14px/22px "Open Sans", "Noto Sans", sans-serif; }
.taskbar > button { width: 62px; }
.taskbar > .start { width: 60px; }
.search { display: flex; align-items: center; width: 360px; background: #f1f1f1; padding: 0 2px 0 15px; color: #222; }
.search input { flex: 1; font-size: 18px; padding-left: 13px; height: 40px; }
.search input::placeholder { color: #333; opacity: 1; }
.art { width: 96px; height: 48px; }
.line { border-bottom: 3px solid #76b9ed; }
.orange { background: #a5682f; border-bottom: 3px solid #ff7800; }
.taskbar .cur { background: #4d6069; }
.taskbar .line { margin: 0 5px; width: 52px; }
.taskbar .cur { margin: 0; width: 62px; }
.tray { margin-left: auto; display: flex; align-items: center; padding-right: 5px; }
.tray svg { fill: none; stroke: #fff; stroke-width: 1.2; }
.tray > button { width: 31px; height: 50px; }
.tray span { padding: 0 17px 0 8px; }
.tray time { text-align: center; }
.tray .notif { width: 32px; margin: 0 14px 0 22px; display: grid; }
.notif svg, .notif b { grid-area: 1 / 1; }
.notif b { font-weight: normal; font-size: 14px; padding: 10px 0 0 8px; line-height: 20px; }
.tray i { width: 1px; height: 50px; background: #56606e; }
```
